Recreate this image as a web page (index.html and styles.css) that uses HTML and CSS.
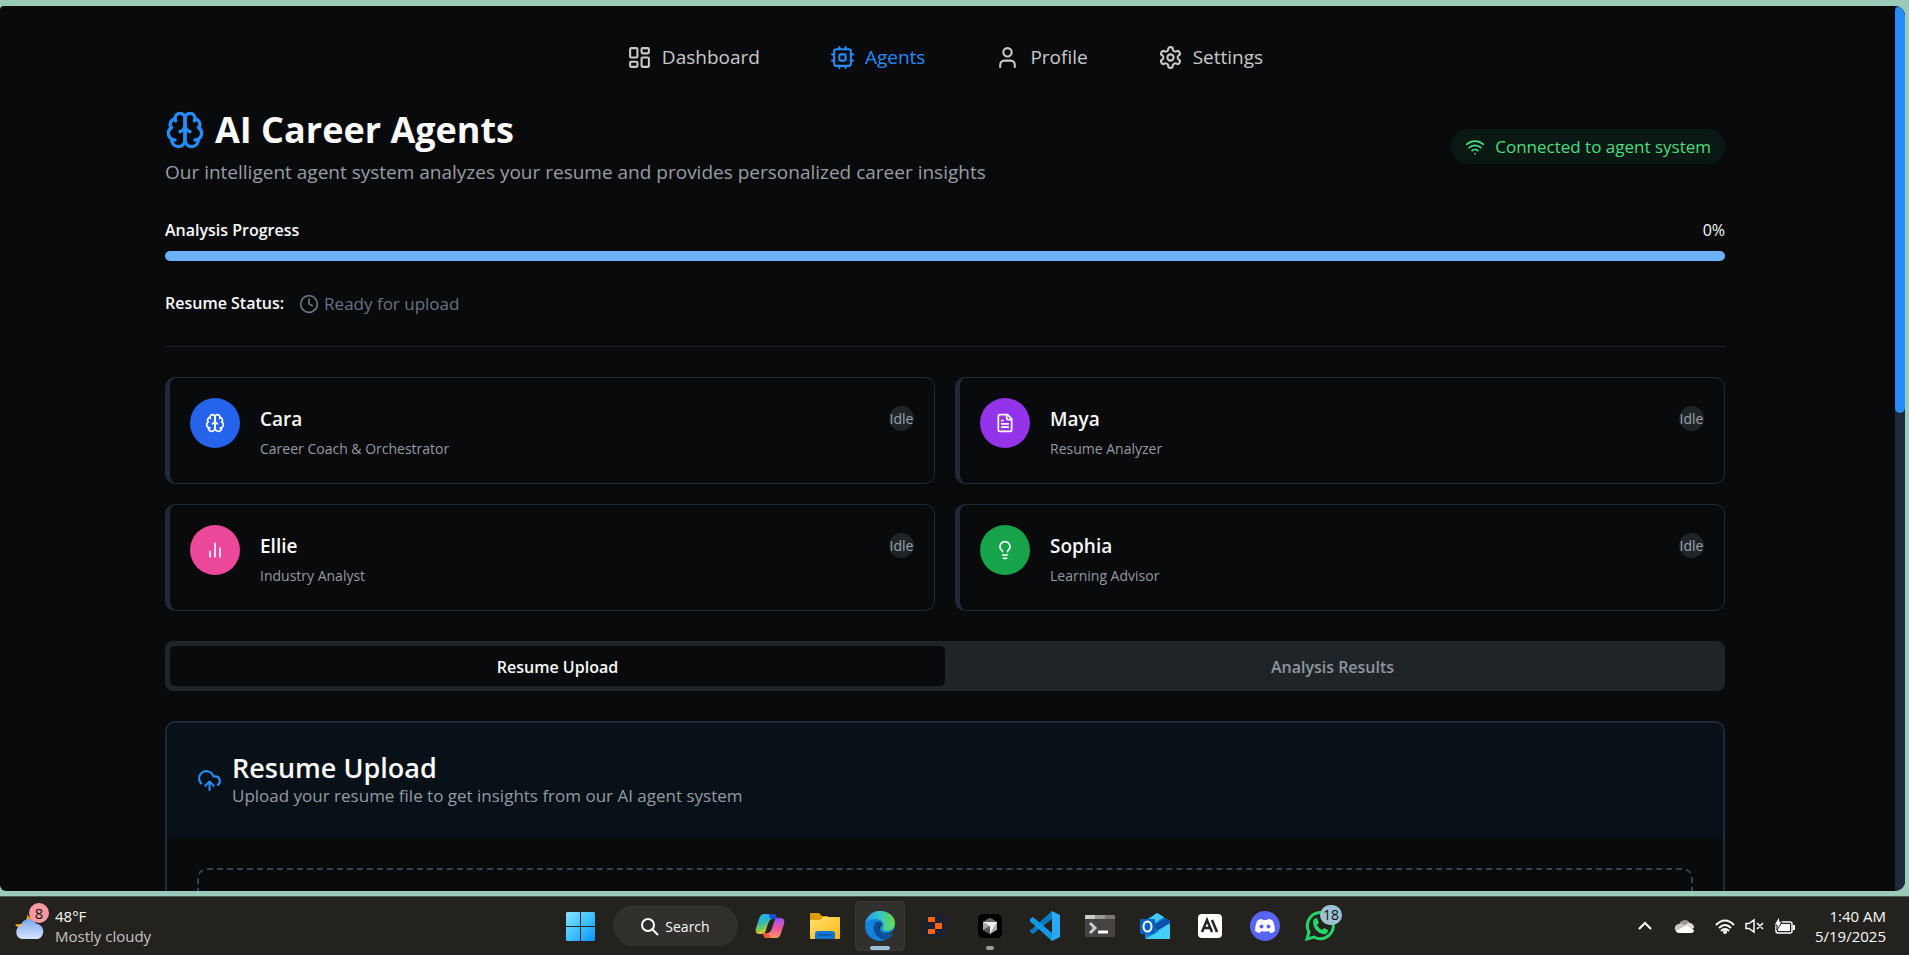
FILE: index.html
```html
<!DOCTYPE html>
<html lang="en">
<head>
<meta charset="utf-8">
<title>AI Career Agents</title>
<link rel="stylesheet" href="styles.css">
</head>
<body>
<svg class="sprite" aria-hidden="true">
  <symbol id="brain" viewBox="0 0 24 24">
    <path d="M12 5a3 3 0 1 0-5.997.125 4 4 0 0 0-2.526 5.77 4 4 0 0 0 .556 6.588A4 4 0 1 0 12 18Z"/>
    <path d="M12 5a3 3 0 1 1 5.997.125 4 4 0 0 1 2.526 5.77 4 4 0 0 1-.556 6.588A4 4 0 1 1 12 18Z"/>
    <path d="M15 13a4.500 4.500 0 0 1-3-4 4.500 4.500 0 0 1-3 4"/>
    <path d="M17.599 6.500a3 3 0 0 0 .399-1.375M6.003 5.125A3 3 0 0 0 6.401 6.500M3.477 10.896a4 4 0 0 1 .585-.396M19.938 10.500a4 4 0 0 1 .585.396M6 18a4 4 0 0 1-1.967-.516M19.967 17.484A4 4 0 0 1 18 18"/>
  </symbol>
</svg>
<div class="browser">
  <div class="page">
    <nav class="nav">
      <a href="#dashboard"><svg class="icon" viewBox="0 0 24 24"><rect width="7" height="9" x="3" y="3" rx="1"/><rect width="7" height="5" x="14" y="3" rx="1"/><rect width="7" height="9" x="14" y="12" rx="1"/><rect width="7" height="5" x="3" y="16" rx="1"/></svg>Dashboard</a>
      <a href="#agents" class="current"><svg class="icon" viewBox="0 0 24 24"><rect x="4" y="4" width="16" height="16" rx="2"/><rect x="9" y="9" width="6" height="6" rx="1"/><path d="M15 2v2M15 20v2M2 15h2M2 9h2M20 15h2M20 9h2M9 2v2M9 20v2"/></svg>Agents</a>
      <a href="#profile"><svg class="icon" viewBox="0 0 24 24"><path d="M19 21v-2a4 4 0 0 0-4-4H9a4 4 0 0 0-4 4v2"/><circle cx="12" cy="7" r="4"/></svg>Profile</a>
      <a href="#settings"><svg class="icon" viewBox="0 0 24 24"><path d="M12.220 2h-.44a2 2 0 0 0-2 2v.18a2 2 0 0 1-1 1.730l-.43.25a2 2 0 0 1-2 0l-.15-.08a2 2 0 0 0-2.730.73l-.22.38a2 2 0 0 0 .73 2.730l.15.1a2 2 0 0 1 1 1.720v.51a2 2 0 0 1-1 1.740l-.15.09a2 2 0 0 0-.73 2.730l.22.38a2 2 0 0 0 2.730.73l.15-.08a2 2 0 0 1 2 0l.43.25a2 2 0 0 1 1 1.730V20a2 2 0 0 0 2 2h.44a2 2 0 0 0 2-2v-.18a2 2 0 0 1 1-1.730l.43-.25a2 2 0 0 1 2 0l.15.08a2 2 0 0 0 2.730-.73l.22-.39a2 2 0 0 0-.73-2.730l-.15-.08a2 2 0 0 1-1-1.740v-.5a2 2 0 0 1 1-1.740l.15-.09a2 2 0 0 0 .73-2.730l-.22-.38a2 2 0 0 0-2.730-.73l-.15.08a2 2 0 0 1-2 0l-.43-.25a2 2 0 0 1-1-1.730V4a2 2 0 0 0-2-2z"/><circle cx="12" cy="12" r="3"/></svg>Settings</a>
    </nav>
    <main class="content">
      <header class="heading">
        <div>
          <h1><svg class="icon" viewBox="0 0 24 24"><use href="#brain"/></svg>AI Career Agents</h1>
          <p class="lead">Our intelligent agent system analyzes your resume and provides personalized career insights</p>
        </div>
        <div class="connection"><svg class="icon" viewBox="0 0 24 24"><path d="M12 20h.01M2 8.820a15 15 0 0 1 20 0M5 12.859a10 10 0 0 1 14 0M8.500 16.429a5 5 0 0 1 7 0"/></svg>Connected to agent system</div>
      </header>
      <section class="progress">
        <div class="progress-label"><span class="strong" id="progress-name">Analysis Progress</span><span>0%</span></div>
        <div class="bar" role="progressbar" aria-valuenow="0" aria-labelledby="progress-name"></div>
      </section>
      <div class="status"><span class="strong">Resume Status:</span><span class="ready"><svg class="icon" viewBox="0 0 24 24"><circle cx="12" cy="12" r="10"/><path d="M12 6v6l4 2"/></svg>Ready for upload</span></div>
      <section class="agents">
        <article class="agent"><span class="avatar blue"><svg class="icon" viewBox="0 0 24 24"><use href="#brain"/></svg></span><div class="who"><h2>Cara</h2><p>Career Coach &amp; Orchestrator</p></div><span class="idle">Idle</span></article>
        <article class="agent"><span class="avatar purple"><svg class="icon" viewBox="0 0 24 24"><path d="M15 2H6a2 2 0 0 0-2 2v16a2 2 0 0 0 2 2h12a2 2 0 0 0 2-2V7Z"/><path d="M14 2v4a2 2 0 0 0 2 2h4M10 9H8M16 13H8M16 17H8"/></svg></span><div class="who"><h2>Maya</h2><p>Resume Analyzer</p></div><span class="idle">Idle</span></article>
        <article class="agent"><span class="avatar pink"><svg class="icon" viewBox="0 0 24 24"><path d="M18 20V10M12 20V4M6 20v-6"/></svg></span><div class="who"><h2>Ellie</h2><p>Industry Analyst</p></div><span class="idle">Idle</span></article>
        <article class="agent"><span class="avatar green"><svg class="icon" viewBox="0 0 24 24"><path d="M15 14c.2-1 .7-1.700 1.500-2.500 1-.9 1.500-2.200 1.500-3.500A6 6 0 0 0 6 8c0 1 .2 2.200 1.500 3.500.7.7 1.300 1.500 1.500 2.500M9 18h6M10 22h4"/></svg></span><div class="who"><h2>Sophia</h2><p>Learning Advisor</p></div><span class="idle">Idle</span></article>
      </section>
      <div class="tabs" role="tablist">
        <button type="button" role="tab" aria-selected="true" class="tab active">Resume Upload</button>
        <button type="button" role="tab" aria-selected="false" class="tab">Analysis Results</button>
      </div>
      <section class="upload">
        <header class="upload-head">
          <svg class="icon" viewBox="0 0 24 24"><path d="M12 13v8M4 14.899A7 7 0 1 1 15.710 8h1.790a4.500 4.500 0 0 1 2.500 8.242M8 17l4-4 4 4"/></svg>
          <div><h2>Resume Upload</h2><p>Upload your resume file to get insights from our AI agent system</p></div>
        </header>
        <div class="upload-body"><div class="dropzone"></div></div>
      </section>
    </main>
  </div>
  <div class="scrollbar"><div class="thumb"></div></div>
</div>
<footer class="taskbar">
  <div class="weather">
    <div class="weather-icon">
      <svg viewBox="0 0 30 30" width="30" height="30"><defs><linearGradient id="cl" x2="0" y2="1"><stop stop-color="#78a5ee"/><stop offset="1" stop-color="#d6e6fb"/></linearGradient></defs><path d="M12 1c2 8-3 15-12 13 2 4 8 7 14 4l6-9c-5 0-8-3-8-8z" fill="#f5a623"/><path d="M7 29a7 7 0 0 1-1-13.500 8 8 0 0 1 15-2A8 8 0 0 1 23 29z" fill="url(#cl)"/><path d="M6 16c4-1 7 0 9 3 2-2 5-3 8-2" fill="none" stroke="#a9c6f5"/></svg>
      <span class="weather-badge">8</span>
    </div>
    <div class="weather-text"><span>48°F</span><span class="dim">Mostly cloudy</span></div>
  </div>
  <div class="apps">
    <button type="button" class="app" aria-label="Start"><svg viewBox="0 0 30 30" width="30" height="30"><defs><linearGradient id="win" x2="1" y2="1"><stop stop-color="#8ae3ff"/><stop offset=".5" stop-color="#3fc4ff"/><stop offset="1" stop-color="#0c92f6"/></linearGradient></defs><path d="M2 1h13v14H1V2zM16 1h13l1 1v13H16zM1 16h14v14H2l-1-1zM16 16h14v13l-1 1H16z" fill="url(#win)"/></svg></button>
    <button type="button" class="search"><svg viewBox="0 0 18 18" width="18" height="18" fill="none" stroke="#fff" stroke-width="2"><circle cx="7" cy="7" r="6"/><path d="M11.500 11.500L17 17"/></svg>Search</button>
    <button type="button" class="app" aria-label="Copilot"><svg viewBox="0 0 30 30" width="30" height="30"><defs><linearGradient id="ca" x2=".3" y2="1"><stop stop-color="#2ba9f4"/><stop offset=".4" stop-color="#24b7c9"/><stop offset=".75" stop-color="#7cc750"/><stop offset="1" stop-color="#f5c51c"/></linearGradient><linearGradient id="cb" x2="0" y2="1"><stop stop-color="#9c52f2"/><stop offset=".5" stop-color="#e6559c"/><stop offset="1" stop-color="#ff9760"/></linearGradient></defs><path d="M9 3h9c3 0 3 2 4 5h-4c-3 0-4 2-5 5l-2 6c-1 3-2 4-5 4-5 0-6-2-5-6l3-9c1-3 2-5 5-5z" fill="url(#ca)"/><path d="M14 3h4c3 0 3 2 4 5h-5c-2 0-3-2-3-5z" fill="#1f4bd6"/><path d="M21 27h-9c-3 0-3-2-4-5h4c3 0 4-2 5-5l2-6c1-3 2-4 5-4 5 0 6 2 5 6l-3 9c-1 3-2 5-5 5z" fill="url(#cb)"/><path d="M8 22h5l3 5h-4c-3 0-3-2-4-5z" fill="#f4553d"/></svg></button>
    <button type="button" class="app" aria-label="File Explorer"><svg viewBox="0 0 30 30" width="30" height="30"><defs><linearGradient id="fo" x2="1" y2="1"><stop stop-color="#ffdf72"/><stop offset="1" stop-color="#fcb913"/></linearGradient></defs><path d="M0 3q0-1 1-1h8l3 3h6v5H0z" fill="#dd9d09"/><path d="M0 9h10l3-3h16q1 0 1 1v20q0 1-1 1H1q-1 0-1-1z" fill="url(#fo)"/><path d="M5 28v-5q0-3 3-3h14q3 0 3 3v5z" fill="#1276d2"/><path d="M8 24h14" stroke="#0a4a8c"/></svg></button>
    <button type="button" class="app open" aria-label="Microsoft Edge"><svg viewBox="0 0 30 30" width="30" height="30"><defs><linearGradient id="ea"><stop stop-color="#2797e8"/><stop offset=".45" stop-color="#32c0d2"/><stop offset="1" stop-color="#6ade44"/></linearGradient></defs><circle cx="15" cy="15" r="15" fill="#1383db"/><path d="M0 13C2 4 8 0 15 0c9 0 15 6 15 12 0 5-4 8-8 8-4 0-5-2-4-4 2-4-2-8-7-8C6 8 2 10 0 13z" fill="url(#ea)"/><path d="M11 11c-4 4-3 13 5 17 5 2 10-2 12-6-5 3-11 2-13-2-1-3 0-5 2-7-1-3-4-3-6-2z" fill="#0c4d9c"/><path d="M17 13c-3 3-3 7 1 9 4 1 9 0 12-5v7l-2-2c-4 2-12 2-14-4-1-3 1-5 3-5z" fill="#2b2a28"/></svg></button>
    <button type="button" class="app" aria-label="Blocks"><svg viewBox="0 0 30 30" width="30" height="30"><rect x="4" y="4" width="22" height="22" rx="2" fill="#1b2130"/><path d="M8 6h7v5H8zM15 12h7v6h-7zM8 18h7v5H8z" fill="#fb640c"/></svg></button>
    <button type="button" class="app running" aria-label="Cursor"><svg viewBox="0 0 30 30" width="30" height="30"><rect x="3" y="3" width="24" height="24" rx="5" fill="#000"/><path d="M15 7l7 4v8l-7 4-7-4v-8z" fill="#a7a7a7"/><path d="M8 11h14l-7 12v-8z" fill="#eee"/><path d="M8 11l7-4 7 4z" fill="#666"/><path d="M8 19l7-4v8z" fill="#555"/></svg></button>
    <button type="button" class="app" aria-label="Visual Studio Code"><svg viewBox="0 0 30 30" width="30" height="30"><path d="M22 0L2 18l-2 1v2l3 2 19-15z" fill="#087cc0"/><path d="M22 30L2 12 0 11V8l3-2 19 16z" fill="#1398e4"/><path d="M22 0l8 4v22l-8 4z" fill="#28a9f1"/></svg></button>
    <button type="button" class="app" aria-label="Terminal"><svg viewBox="0 0 30 30" width="30" height="30"><rect y="4" width="30" height="22" rx="1" fill="#444"/><path d="M0 8V5q0-1 1-1h9v4z" fill="#ccc"/><path d="M10 4h10v4H10z" fill="#999"/><path d="M20 4h9q1 0 1 1v3H20z" fill="#777"/><path d="M5 12l5 5-5 5" fill="none" stroke="#ccc" stroke-width="3"/><path d="M13 21h10" stroke="#fff" stroke-width="3"/></svg></button>
    <button type="button" class="app" aria-label="Outlook"><svg viewBox="0 0 30 30" width="30" height="30"><path d="M5 9L17 2l13 8v17q0 1-1 1H7q-2 0-2-2z" fill="#1480d2"/><path d="M9 8l8-6 7 4-12 8zM17 14l10-6 3 2v5l-12 6z" fill="#46c6f3"/><path d="M14 14l12-7 4 3v2l-13 8z" fill="#0a4fae"/><path d="M5 28l25-14v13q0 1-1 1z" fill="#42d0f8"/><rect y="8" width="15" height="15" rx="1" fill="#0763bd"/><ellipse cx="7.500" cy="15.500" rx="4" ry="5" fill="none" stroke="#fff" stroke-width="2"/></svg></button>
    <button type="button" class="app" aria-label="Anthropic"><svg viewBox="0 0 30 30" width="30" height="30"><rect x="3" y="3" width="24" height="24" rx="4" fill="#fff"/><path d="M7 21l5-12 5 12M9 17h6M17 9l5 12" fill="none" stroke="#222" stroke-width="2.500"/></svg></button>
    <button type="button" class="app" aria-label="Discord"><svg viewBox="0 0 30 30" width="30" height="30"><circle cx="15" cy="15" r="15" fill="#5865f2"/><path d="M12 8q-3 0-5 2-2 5-2 10 3 2 5 2l1-2q4 1 8 0l1 2q3 0 5-2 0-5-2-10-2-2-5-2l-1 1h-4z" fill="#fff"/><circle cx="11.500" cy="15.500" r="2" fill="#5865f2"/><circle cx="18.500" cy="15.500" r="2" fill="#5865f2"/></svg></button>
    <button type="button" class="app" aria-label="WhatsApp"><svg viewBox="0 0 30 30" width="30" height="30"><path d="M2 28l2-7a13 13 0 1 1 5 5z" fill="none" stroke="#25d366" stroke-width="3"/><path d="M9 8l3-1 2 5-2 2q2 4 5 5l2-2 4 2q0 5-5 4Q9 21 8 12q0-3 1-4z" fill="#25d366"/></svg><span class="count">18</span></button>
  </div>
  <div class="tray">
    <svg class="chevron" viewBox="0 0 14 8" width="14" height="8" fill="none" stroke="#fff" stroke-width="2"><path d="M1 7l6-6 6 6"/></svg>
    <svg class="cloud" viewBox="0 0 20 14" width="20" height="14"><path d="M4 6a6 6 0 0 1 11-2l-4 4z" fill="#999"/><path d="M4 13.500A4 4 0 0 1 4 5q3-1 5 1l5 5z" fill="#c8c8c8"/><path d="M9 7l4-3h2a4.500 4.500 0 0 1 4 5l-5 2z" fill="#ddd"/><path d="M1 12l9-5q1-.5 2 0l7 4q0 3-3 3H4q-2 0-3-2z" fill="#fff"/></svg>
    <svg viewBox="0 0 20 15" width="20" height="15" fill="none" stroke="#fff" stroke-width="2"><path d="M1 6q9-9 18 0M4 9q6-6 12 0M6 12q4-4 8 0"/><circle cx="10" cy="13" r="1"/></svg>
    <svg viewBox="0 0 20 14" width="20" height="14" fill="none" stroke="#fff" stroke-width="1.500"><path d="M1 4.500h3L9 1v12L4 9.500H1zM12 4l6 6M18 4l-6 6"/></svg>
    <svg viewBox="0 0 20 16" width="20" height="16"><rect x="1" y="4" width="16" height="11" rx="2" fill="none" stroke="#fff" stroke-width="1.500"/><path d="M5 6h10v7H3V9zM18 7h2v5h-2z" fill="#fff"/><path d="M4-1L-1 7h3v5l5-8H5z" fill="#fff" stroke="#24211e"/></svg>
    <div class="clock"><span>1:40 AM</span><span>5/19/2025</span></div>
  </div>
</footer>
</body>
</html>
```

FILE: styles.css
```css
* { box-sizing: border-box; margin: 0; padding: 0; }
body {
  height: 100vh;
  display: flex;
  flex-direction: column;
  overflow: hidden;
  background: #9acbb9;
  color: #fafafa;
  font: 17px/25px "Open Sans", "Noto Sans", sans-serif;
}
button { font: inherit; color: inherit; border: 0; background: none; }
.sprite { position: absolute; width: 0; height: 0; }
.icon {
  flex: none;
  width: 20px;
  height: 20px;
  fill: none;
  stroke: currentColor;
  stroke-width: 2;
  stroke-linecap: round;
  stroke-linejoin: round;
}
.strong { font-weight: 600; font-size: 16px; }

/* Browser window */
.browser {
  flex: 1;
  min-height: 0;
  display: flex;
  margin: 6px 4px 5px 0;
  border-radius: 4px 10px 10px 6px;
  overflow: hidden;
  background: #080a0c;
}
.page { flex: 1; overflow: hidden; }
.scrollbar { width: 10px; background: #1e293b; }
.thumb { height: 46%; border-radius: 5px; background: #258cf8; }

.nav {
  display: flex;
  justify-content: center;
  gap: 70px;
  padding: 36px 5px 0 0;
}
.nav a {
  display: flex;
  align-items: center;
  gap: 10px;
  height: 30px;
  font-size: 19px;
  color: #c9cac9;
  text-decoration: none;
}
.nav .icon { width: 25px; height: 25px; }
.nav .current { color: #258cf8; }

.content { padding: 30px 170px 0 165px; }
.heading { display: flex; justify-content: space-between; align-items: center; }
h1 {
  display: flex;
  align-items: center;
  gap: 10px;
  font-size: 36px;
  line-height: 56px;
}
h1 .icon { width: 40px; height: 40px; color: #258cf8; }
.lead { font-size: 19px; line-height: 28px; color: #989ea2; }
.connection {
  display: flex;
  align-items: center;
  gap: 10px;
  height: 35px;
  margin-top: 5px;
  padding: 0 14px;
  border-radius: 18px;
  background: #0a1813;
  color: #4ade80;
}

.progress { margin-top: 29px; }
.progress-label { display: flex; justify-content: space-between; line-height: 30px; font-size: 16px; }
.bar { height: 10px; margin-top: 6px; border-radius: 5px; background: #6db1fa; }
.status {
  display: flex;
  align-items: center;
  gap: 15px;
  height: 86px;
  border-bottom: 1px solid #1c212b;
}
.ready { display: flex; align-items: center; gap: 5px; color: #6b7280; }

.agents {
  display: grid;
  grid-template-columns: 1fr 1fr;
  gap: 20px;
  margin-top: 30px;
}
.agent {
  display: flex;
  align-items: flex-start;
  gap: 20px;
  padding: 20px;
  border: 1px solid #1f2937;
  border-left-width: 5px;
  border-radius: 10px;
}
.avatar {
  display: grid;
  place-items: center;
  width: 50px;
  height: 50px;
  border-radius: 50%;
  color: #fff;
}
.blue { background: #2563eb; }
.purple { background: #9333ea; }
.pink { background: #ec4899; }
.green { background: #16a34a; }
.who { flex: 1; padding: 6px 0 2px; }
.who h2 { font-size: 19px; font-weight: 600; line-height: 30px; }
.who p { margin-top: 2px; font-size: 14px; color: #949ba1; }
.idle {
  display: grid;
  place-items: center;
  width: 25px;
  height: 25px;
  margin-top: 8px;
  border-radius: 50%;
  background: #1f2429;
  color: #9ca3a8;
  font-size: 14px;
}

.tabs {
  display: grid;
  grid-template-columns: 1fr 1fr;
  margin-top: 30px;
  padding: 5px;
  border-radius: 8px;
  background: #1f2429;
}
.tab { height: 40px; padding-top: 2px; border-radius: 5px; font-size: 16px; font-weight: 600; color: #8f969c; }
.tab.active { background: #080a0c; color: #fafafa; }

.upload {
  margin-top: 30px;
  border: 2px solid #1f2937;
  border-radius: 10px;
  overflow: hidden;
}
.upload-head {
  display: flex;
  align-items: center;
  gap: 10px;
  padding: 30px;
  background: #081018;
}
.upload-head .icon { width: 25px; height: 25px; color: #258cf8; }
.upload-head h2 { font-size: 27px; font-weight: 600; line-height: 30px; }
.upload-head p { color: #949ba1; }
.upload-body { padding: 30px; }
.dropzone { height: 250px; border: 2px dashed #374151; border-radius: 10px; }

/* Taskbar */
.taskbar {
  display: grid;
  grid-template-columns: 1fr auto 1fr;
  align-items: center;
  height: 59px;
  padding-right: 9px;
  border-top: 1px solid #4c5550;
  background: #24221f;
  font-size: 15px;
  line-height: 20px;
}
.weather { display: flex; gap: 10px; padding-left: 15px; }
.weather-icon { position: relative; width: 30px; padding-top: 4px; }
.weather-badge {
  position: absolute;
  top: -3px;
  left: 14px;
  width: 20px;
  border-radius: 50%;
  background: #fd99a3;
  color: #111;
  text-align: center;
}
.weather-text, .clock { display: flex; flex-direction: column; }
.dim { color: #c4c4c4; }
.apps { display: flex; align-items: center; gap: 5px; }
.app {
  position: relative;
  display: grid;
  place-items: center;
  width: 50px;
  height: 50px;
  border-radius: 5px;
}
.app.open { background: #32302e; box-shadow: inset 0 0 0 1px #3c3a38; }
.app.open::after, .app.running::after {
  content: "";
  position: absolute;
  bottom: 1px;
  width: 20px;
  height: 4px;
  border-radius: 2px;
  background: #9cc3d3;
}
.app.running::after { width: 8px; background: #9b9b9b; }
.search {
  display: flex;
  align-items: center;
  justify-content: center;
  gap: 6px;
  width: 125px;
  height: 40px;
  margin: 0 2px 0 3px;
  border-radius: 20px;
  background: #31302d;
  border-top: 1px solid #3c3a38;
  font-size: 14px;
}
.count {
  position: absolute;
  top: 4px;
  right: 3px;
  width: 22px;
  border-radius: 10px;
  background: #9cc3d3;
  color: #111;
  font-size: 14px;
}
.tray { display: flex; justify-content: flex-end; align-items: center; gap: 10px; padding-right: 14px; }
.tray svg { overflow: visible; }
.chevron { margin-right: 13px; }
.cloud { margin-right: 10px; }
.clock { margin-left: 10px; text-align: right; }
```
